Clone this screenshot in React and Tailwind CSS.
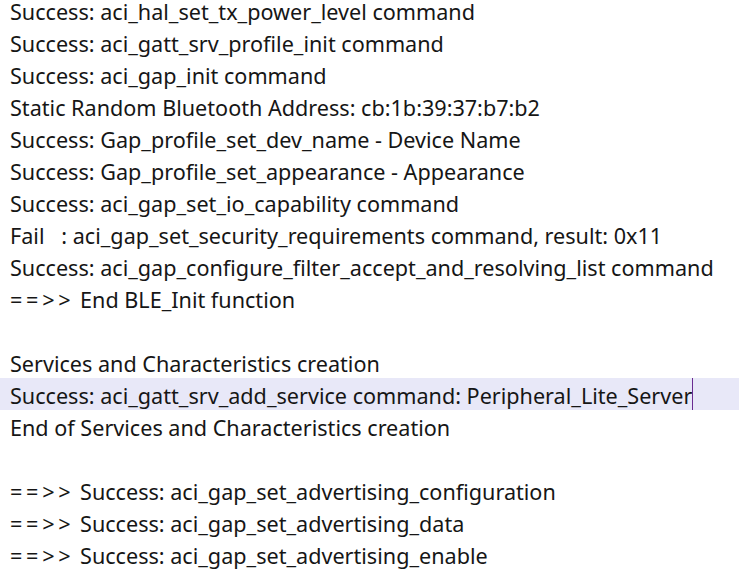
const LINES = [
  "Success: aci_hal_set_tx_power_level command",
  "Success: aci_gatt_srv_profile_init command",
  "Success: aci_gap_init command",
  "Static Random Bluetooth Address: cb:1b:39:37:b7:b2",
  "Success: Gap_profile_set_dev_name - Device Name",
  "Success: Gap_profile_set_appearance - Appearance",
  "Success: aci_gap_set_io_capability command",
  "Fail   : aci_gap_set_security_requirements command, result: 0x11",
  "Success: aci_gap_configure_filter_accept_and_resolving_list command",
  "==>> End BLE_Init function",
  "",
  "Services and Characteristics creation",
  "Success: aci_gatt_srv_add_service command: Peripheral_Lite_Server",
  "End of Services and Characteristics creation",
  "",
  "==>> Success: aci_gap_set_advertising_configuration",
  "==>> Success: aci_gap_set_advertising_data",
  "==>> Success: aci_gap_set_advertising_enable",
];

const CURRENT = 12;

function LogText({ text }) {
  if (text.startsWith("==>>")) {
    return (
      <>
        <span className="tracking-[3.75px]">==&gt;&gt;</span>
        {text.slice(4)}
      </>
    );
  }
  return text;
}

export default function App() {
  return (
    <div className="w-[739px] h-[575px] overflow-hidden bg-white">
      <div className="-mt-[6px] font-['Noto_Sans',sans-serif] text-[21.6px] leading-[20px] text-[#161616]">
        {LINES.map((line, i) => (
          <div
            key={i}
            className={`h-[32px] pl-[10px] pt-[4px] flex items-center whitespace-pre ${
              i === CURRENT ? "bg-[#e8e8f8]" : ""
            }`}
          >
            <span>
              <LogText text={line} />
            </span>
            {i === CURRENT && (
              <span className="w-0 h-[32px] -mt-[4px] border-l border-[#6a2c91]" />
            )}
          </div>
        ))}
      </div>
    </div>
  );
}
